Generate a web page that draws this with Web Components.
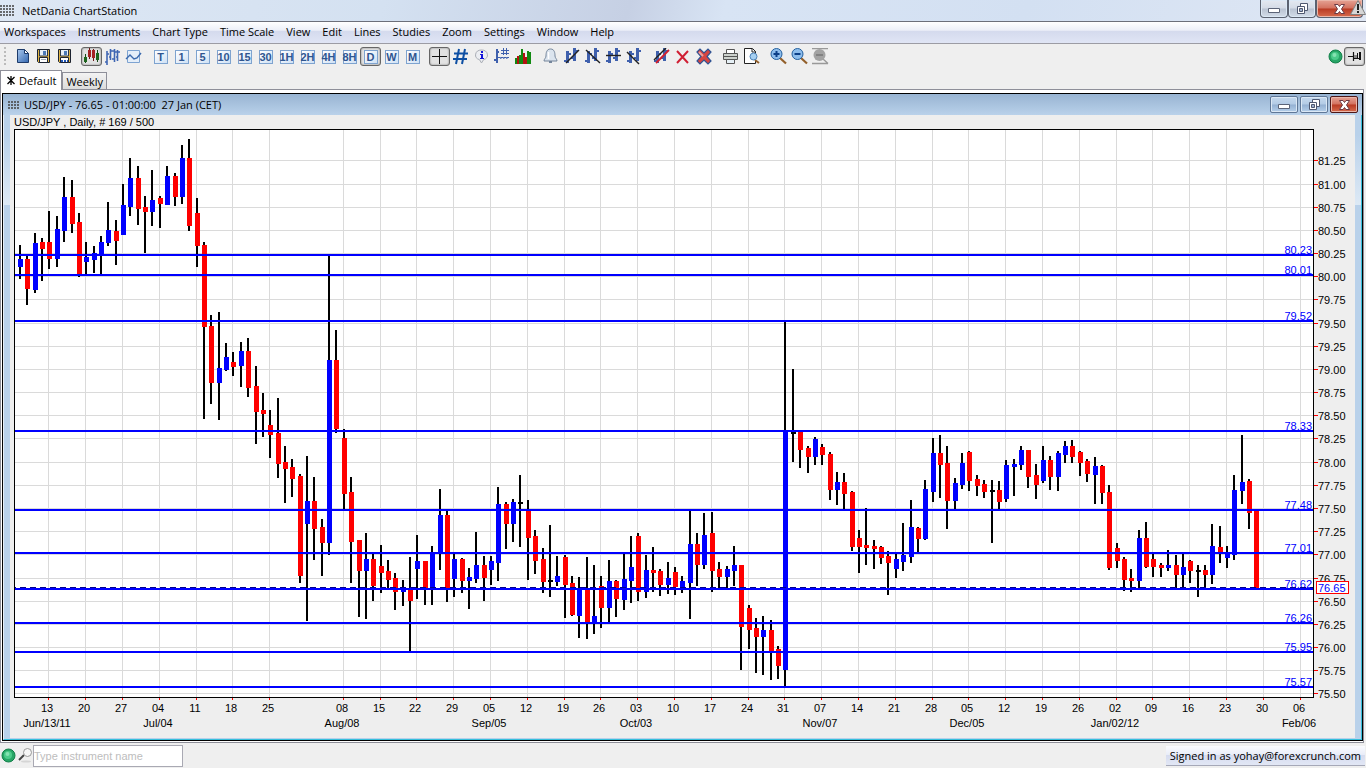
<!DOCTYPE html>
<html lang="en">
<head>
<meta charset="utf-8">
<title>NetDania ChartStation</title>
<style>
  body {
    margin: 0;
    font-family: "Open Sans", "Noto Sans", sans-serif;
    font-size: 11px;
    color: #000;
    background: #efefef;
  }
</style>
</head>
<body>
<chart-station></chart-station>

<script>
// Toolbar icons, drawn on a 17 x 17 grid
const BARS = '<path d="M3 3h3v12H3zM1 12h2v2H1zM6 5h2v2H6zM10 0h3v13h-3zM8 9h2v2H8zM13 2h2v2h-2z" fill="#3f60ad"/>';
const FLOPPY = `
  <path d="M2.500 1.500h12v13h-11l-1-1z" fill="#e0b545" stroke="#1c2330"/>
  <path d="M5 2h7v6H5z" fill="#e8f0f8"/><path d="M4.500 2v6h8V2" fill="none" stroke="#2b3646"/>
  <path d="M8 3h3v4H8z" fill="#4c79b5"/>`;
const ICONS = {
  newfile: `<defs><linearGradient id="g" x2="1" y2="1"><stop stop-color="#a9c8ee"/><stop offset="1" stop-color="#3568b0"/></linearGradient></defs>
    <path d="M3.500 1.500h7l4 4v9h-11z" fill="url(#g)" stroke="#1d3b6b"/><path d="M10.500 1.500v4h4z" fill="#fff" stroke="#1d3b6b"/>`,
  save: FLOPPY + '<path d="M4.500 9.500h8v5h-8z" fill="#fff" stroke="#1c2330"/><path d="M6 11h5v1H6z" fill="#9aa7b8"/>',
  saveas: FLOPPY + '<path d="M4.500 9.500h8v5h-8z" fill="#fff" stroke="#1c2330"/><path d="M5 12h2v2H5zM8 12h2v2H8zM11 12h1v2h-1z" fill="#1f56b8"/>',
  candles: `<path d="M2 6h1v9H2zM14 2h1v12h-1z" fill="#174a17"/><path d="M6 0h1v11H6zM10 1h1v12h-1z" fill="#6b1717"/>
    <path d="M1 9h3v5H1zM13 5h3v7h-3z" fill="#1c651c"/><path d="M5 2h3v7H5zM9 2h3v8H9z" fill="#a52323"/>`,
  ohlc: '<path d="M3 3v14M1 14h2M3 6h2M6.500 1v11M5 9h2M7 3h3M10.500 1v13M8 11h3M10 4h3M13.500 2v11M12 9h2M14 4h2" fill="none" stroke="#3f66b3" stroke-width="1.6"/>',
  line: '<path d="M2.500 2.500h12v12h-12z" fill="#e4eef9" stroke="#7da3d1"/><path d="M1 11l4-4 4 4 3-1 4-5" fill="none" stroke="#3a69ad" stroke-width="1.400"/>',
  cross: '<path d="M8.500 1v15M1 8.500h15" stroke="#111"/>',
  hash: '<path d="M7 1L4 16M13 1l-3 15M2 5.500h14M1 11h14" stroke="#0d4fa3" stroke-width="2"/>',
  info: '<path d="M8.500 2a6 5 0 0 1 2 9.700L8.500 15l-2-3.300A6 5 0 0 1 8.500 2z" fill="#eceef2" stroke="#a9adb5"/><path d="M8 3h2v2H8zM7 6h3v4h1v1H7v-1h1V7H7z" fill="#1212d8"/>',
  values: '<path d="M2 1h2v14H2zM0 11h2v2H0zM4 3h1v2H4z" fill="#3f60ad"/><path d="M9.500 0v7M12.500 0v7M7 2.500h8M7 5.500h8" stroke="#3f60ad"/><path d="M6 10h9" stroke="#3f60ad" stroke-width="1.500" stroke-dasharray="1.500"/><path d="M4 9.500h12" stroke="#3f60ad" stroke-dasharray="2 1"/>',
  volume: '<path d="M0 10h2v6H0zM4 7h2v9H4zM6 1h2v15H6zM12 3h2v13h-2zM14 4h2v12h-2z" fill="#118a11"/><path d="M2 8h2v8H2zM8 5h2v11H8zM10 9h2v7h-2z" fill="#b31111"/>',
  bell: '<path d="M8.500 1c4 0 4.500 4 4.500 7 0 2 2 3 2 5H2c0-2 2-3 2-5 0-3 .500-7 4.500-7z" fill="#dbe4ee" stroke="#74859b"/><path d="M7 13h3v2H7z" fill="#74859b"/><path d="M6.500 4v7" stroke="#fff" stroke-width="1.500"/>',
  trend: BARS + '<path d="M3 15L16 2" stroke="#222" stroke-width="1.400"/>',
  ray: BARS + '<path d="M2 2l14 13" stroke="#222" stroke-width="1.400"/>',
  level: BARS + '<path d="M1 7.500h15" stroke="#222" stroke-width="1.400"/>',
  channel: BARS + '<path d="M1 4l12 12" stroke="#222" stroke-width="1.400"/>',
  editline: BARS + '<path d="M1 12L13 0" stroke="#222" stroke-width="1.400"/><path d="M3 15L16 2" stroke="#d3202f" stroke-width="1.800"/>',
  remove: '<path d="M3 3l11 12M14 3L3 15" stroke="#d01f33" stroke-width="2"/>',
  removeall: '<path d="M2 4l3-3 4 4 4-4 3 3-4 4.500 4 4.500-3 3-4-4-4 4-3-3 4-4.500z" fill="#d64541" stroke="#2f5394" stroke-width="1.200"/><path d="M4 4l4 4" stroke="#eda29c" stroke-width="2"/>',
  print: '<path d="M4.500 1.500h8v4h-8z" fill="#fff" stroke="#555"/><path d="M1.500 5.500h14v6h-14z" fill="#cdd2cd" stroke="#555"/><path d="M2 8.500h13" stroke="#555"/><path d="M4.500 11.500h8v4h-8z" fill="#e6f0f6" stroke="#555"/>',
  preview: '<path d="M1.500 .500h8l3 3v12h-11z" fill="#fff" stroke="#222"/><path d="M9 1v3h4" fill="none" stroke="#222"/><path d="M12 12l4 3" stroke="#93602b" stroke-width="2"/><circle cx="10.500" cy="8.500" r="3.500" fill="#a6d0f2" stroke="#4c82b8"/>',
  zoomin: '<path d="M10 10l6 5.500" stroke="#93602b" stroke-width="2.200"/><circle cx="6.500" cy="6" r="5.500" fill="#8dbdec" stroke="#24609f"/><path d="M3.500 6h6M6.500 3v6" stroke="#0c3f87" stroke-width="2"/>',
  zoomout: '<path d="M10 10l6 5.500" stroke="#93602b" stroke-width="2.200"/><circle cx="6.500" cy="6" r="5.500" fill="#8dbdec" stroke="#24609f"/><path d="M3.500 6h6" stroke="#0c3f87" stroke-width="2"/>',
  zoomreset: '<path d="M0 .500h16M0 15.500h16M11 11l5 4.500" stroke="#999" stroke-width="1.400"/><circle cx="7.500" cy="7" r="6" fill="#a3a3a3"/><path d="M4 7h7" stroke="#777" stroke-width="1.500"/>',
  pin: '<path d="M2 8.500h5M7.500 4v9" stroke="#111" stroke-width="1.200"/><path d="M8 7h4v4H8z" fill="#888"/><path d="M8 10h5v1H8zM11 5h1v6h-1zM13 4h2v8h-2z" fill="#111"/>'
};

const GLYPHS = {
  min: '<path d="M2.500 7.500h11v4h-11z" fill="#fff" stroke="#5b6478"/>',
  restore: '<path d="M6.500 2.500h7v7h-7z" fill="#fff" stroke="#4f5870"/><path d="M3.500 5.500h7v7h-7z" fill="#fff" stroke="#4f5870"/><path d="M5.500 7.500h3v3h-3z" fill="#9fb0cc" stroke="#4f5870"/>',
  close: '<path d="M3.500 3.500h3.500l1.500 2 1.500-2h3.500L10.500 8l3 4.500H10l-1.500-2-1.500 2H3.500l3-4.500z" fill="#fff" stroke="#6b3a45"/>'
};

const BALL = `<svg width="15" height="15" viewBox="0 0 15 15" aria-hidden="true">
  <circle cx="7.500" cy="7.500" r="6.500" fill="#27a566" stroke="#0f7f47"/>
  <circle cx="7" cy="7" r="4" fill="#4ccb8a"/><circle cx="6.500" cy="6" r="2" fill="#86e2b2"/></svg>`;

function shadow(el, html) {
  el.attachShadow({ mode: 'open' }).innerHTML = html;
}

// Dotted application mark
class DotMark extends HTMLElement {
  constructor() {
    super();
    shadow(this, `
      <style>
        :host { display: block; flex: none; width: 15px; height: 12px;
          background: radial-gradient(circle at 1px 1px, #4a4a4a 1px, transparent 1px) 0 0 / 3px 3px; opacity: .8; }
        :host([small]) { width: 11px; height: 8px; }
      </style>`);
  }
}

class WindowButton extends HTMLElement {
  constructor() {
    super();
    const kind = this.getAttribute('kind');
    shadow(this, `
      <style>
        :host { display: block; width: 28px; height: 17px; }
        button { display: flex; align-items: center; justify-content: center; width: 100%; height: 100%;
          box-sizing: border-box; padding: 0; border: 1px solid #5f7797; border-radius: 2px;
          background: linear-gradient(#c5d9ee, #b3cbe5 48%, #94b0d2 52%, #b4cfea); box-shadow: inset 0 0 0 1px #dbe8f5; }
        .close { border-color: #4e1717; background: linear-gradient(#e5a294, #d3715f 48%, #b93a23 52%, #d66b4d); box-shadow: inset 0 0 0 1px #eab6a9; }
        :host([big]) { height: 18px; }
        :host([big]) button { border-top: 0; border-radius: 0 0 4px 4px; border-color: #5b6270; }
        :host([big]) button:not(.close) { background: linear-gradient(#e4e9f1, #d4dbe6 48%, #b9c3d2 52%, #d3dce8); }
      </style>
      <button class="${kind}" aria-label="${kind}"><svg width="17" height="16" viewBox="0 0 17 16">${GLYPHS[kind]}</svg></button>`);
  }
}

class TitleBar extends HTMLElement {
  constructor() {
    super();
    shadow(this, `
      <style>
        :host { display: flex; justify-content: space-between; height: 21px; border-bottom: 1px solid #6c6f7a;
          background: linear-gradient(105deg, #dde7f4, #d4e1f1 28%, #c6d0e4 46%, #d8e4f4 53%, #d3e0f2 75%, #dfe7f4); }
        .name { display: flex; align-items: center; gap: 7px; }
        .controls { display: flex; position: relative; padding-right: 3px; }
        .controls window-button:nth-child(3) { width: 47px; }
        .alert { position: absolute; right: 0; top: 0; }
      </style>
      <div class="name"><dot-mark></dot-mark><span><slot></slot></span></div>
      <div class="controls">
        <window-button big kind="min"></window-button>
        <window-button big kind="restore"></window-button>
        <window-button big kind="close"></window-button>
        <svg class="alert" width="16" height="16" viewBox="0 0 16 16"><path d="M8 .500L15.500 14.500H.500z" fill="#d6d6d6" stroke="#808080"/><path d="M7 4h2v6H7zM7 11h2v2H7z" fill="#222"/></svg>
      </div>`);
  }
}

class MenuBar extends HTMLElement {
  constructor() {
    super();
    const items = ['Workspaces', 'Instruments', 'Chart Type', 'Time Scale', 'View', 'Edit', 'Lines', 'Studies', 'Zoom', 'Settings', 'Window', 'Help'];
    shadow(this, `
      <style>
        :host { display: block; height: 21px; border-bottom: 1px solid #9c9ca4;
          background: linear-gradient(#fff, #eceff8 40%, #d4daed 42%, #e0e5f5); }
        nav { display: flex; gap: 12px; padding-left: 4px; }
        button { font: inherit; line-height: 20px; color: inherit; border: 0; padding: 0; background: none; }
      </style>
      <nav>${items.map(t => `<button>${t}</button>`).join('')}</nav>`);
  }
}

class ToolButton extends HTMLElement {
  constructor() {
    super();
    const icon = this.getAttribute('icon');
    const face = icon
      ? `<svg width="17" height="17" viewBox="0 0 17 17" aria-hidden="true">${ICONS[icon]}</svg>`
      : '<span><slot></slot></span>';
    shadow(this, `
      <style>
        :host { display: block; width: 21px; height: 19px; }
        button { display: flex; align-items: center; justify-content: center; width: 100%; height: 100%;
          box-sizing: border-box; padding: 0; border: 1px solid transparent; border-radius: 3px; background: none; }
        :host([pressed]) button { border: 1px solid #666; background: #e2e2e2; box-shadow: inset 0 0 2px #777; }
        svg { flex: none; }
        span { display: flex; justify-content: center; box-sizing: border-box; width: 14px; height: 14px; border: 1px solid #7ea3cf;
          background: linear-gradient(135deg, #fff, #cfe1f5); font: bold 11px/12px "Liberation Sans", sans-serif; color: #2f5590; }
      </style>
      <button ${icon ? `aria-label="${icon}"` : ''}>${face}</button>`);
  }
}

class ToolBar extends HTMLElement {
  constructor() {
    super();
    const groups = [
      ['*newfile', '*save', '*saveas'],
      ['*candles!', '*ohlc', '*line'],
      ['T', '1', '5', '10', '15', '30', '1H', '2H', '4H', '8H', 'D!', 'W', 'M'],
      ['*cross!', '*hash', '*info', '*values', '*volume'],
      ['*bell', '*trend', '*ray', '*level', '*channel'],
      ['*editline', '*remove', '*removeall'],
      ['*print', '*preview'],
      ['*zoomin', '*zoomout', '*zoomreset']
    ];
    const button = item => {
      const pressed = item.endsWith('!') ? 'pressed' : '';
      const name = item.replace('!', '');
      return name[0] === '*'
        ? `<tool-button icon="${name.slice(1)}" ${pressed}></tool-button>`
        : `<tool-button ${pressed}>${name}</tool-button>`;
    };
    shadow(this, `
      <style>
        :host { display: flex; align-items: center; gap: 6px; height: 25px; padding: 0 1px 1px 4px; background: #efefef; }
        .grip { width: 2px; height: 20px; background: repeating-linear-gradient(#bbb 0 2px, transparent 2px 4px); }
        .group { display: flex; }
        .end { display: flex; align-items: center; margin-left: auto; gap: 1px; }
      </style>
      <div class="grip"></div>
      ${groups.map(g => `<div class="group">${g.map(button).join('')}</div>`).join('')}
      <div class="end">${BALL}<tool-button icon="pin" pressed></tool-button></div>`);
  }
}

class TabStrip extends HTMLElement {
  constructor() {
    super();
    shadow(this, `
      <style>
        :host { display: flex; align-items: flex-end; height: 20px; margin-right: 2px; }
        button { font: inherit; color: inherit; box-sizing: border-box; border: 1px solid #8e8f99; border-bottom: 0; padding: 0 3px; height: 18px; line-height: 17px; background: linear-gradient(#f3f3f3, #dcdcdc); }
        .active { display: flex; align-items: center; gap: 4px; height: 20px; padding: 0 5px 0 6px; background: #fff; }
        .rest { flex: 1; }
        button:not(.active), .rest { border-bottom: 1px solid #8e8f99; }
      </style>
      <button class="active"><svg width="8" height="9" viewBox="0 0 8 9"><path d="M4 0v9M.500 1l7 7M7.500 1l-7 7" stroke="#000" stroke-width="1.300"/></svg>Default</button>
      <button>Weekly</button>
      <div class="rest"></div>`);
  }
}

class ChartWindow extends HTMLElement {
  constructor() {
    super();
    shadow(this, `
      <style>
        :host { display: flex; flex-direction: column; flex: 1; border: 1px solid #000; min-height: 0; }
        header { display: flex; align-items: center; height: 21px; padding: 0 4px 0 5px; gap: 5px; background: linear-gradient(#98b4d2, #b9d1ea); }
        .caption { flex: 1; white-space: pre; }
        .controls { display: flex; gap: 2px; }
        .frame { flex: 1; display: flex; min-height: 0; padding: 0 6px 1px; border: 1px solid #35bfdc; border-left-color: #e6eef7; border-top: 0;
          background: linear-gradient(#b9d1ea 20px, #dde9f5) 0 0 / 100% 90px no-repeat, #b9d1ea; }
        .pane { flex: 1; display: flex; flex-direction: column; min-width: 0; background: #eee; }
      </style>
      <header>
        <dot-mark small></dot-mark><span class="caption"><slot name="caption"></slot></span>
        <div class="controls">
          <window-button kind="min"></window-button>
          <window-button kind="restore"></window-button>
          <window-button kind="close"></window-button>
        </div>
      </header>
      <div class="frame"><div class="pane"><slot></slot></div></div>`);
  }
}

// One entry per session: colour, high, body top, body bottom, low.
// b = up, r = down, k = unchanged. Heights are drawing rows, the plot starts at ROW.
const ROW = 129;
const SESSIONS = `
b 245 259 267 279|r 255 259 289 305|b 233 243 290 293|r 238 242 249 281|r 211 242 259 269|b 216 229 259 267|b 177 197 231 242|r 180 197 224 233
r 213 222 276 277|b 242 257 262 275|b 246 253 260 273|b 236 242 256 275|b 202 230 243 246|r 220 231 241 265|b 184 205 235 235|b 158 178 207 216
r 166 178 209 225|r 196 207 212 253|b 170 200 212 226|r 196 198 204 228|b 166 176 205 205|r 173 176 197 206|b 145 158 197 204|r 139 158 226 231
r 198 213 246 267|r 242 245 327 419|r 315 326 383 404|b 312 368 383 420|b 343 357 370 371|r 352 362 367 376|b 342 351 366 387|r 338 351 388 397
r 366 386 412 444|r 393 410 414 437|r 410 425 435 458|r 398 433 464 478|r 446 462 469 503|r 459 467 479 497|r 474 476 576 583|b 456 501 524 621
r 477 501 529 560|r 519 527 543 576|b 255 360 543 555|r 330 360 429 433|r 429 438 494 509|r 477 492 542 583|r 540 540 571 617|b 533 559 571 619
r 554 559 586 601|r 545 566 573 593|r 560 571 580 589|r 573 578 592 610|b 580 587 592 606|r 557 590 601 651|b 535 561 569 599|r 561 561 588 605
b 546 553 589 605|b 489 515 553 570|r 510 515 589 602|b 554 559 579 597|r 558 559 581 593|b 568 577 581 609|b 532 565 579 583|r 556 565 578 601
b 556 561 570 585|b 487 504 563 581|r 502 504 524 549|b 499 502 524 542|k 475 502 504 547|r 500 510 538 580|r 530 536 561 574|r 548 559 582 593
k 525 580 582 597|b 556 576 582 586|r 555 557 585 618|r 576 583 615 616|b 577 588 616 638|r 557 589 623 639|b 565 616 623 634|r 576 586 608 628
b 560 581 608 623|r 580 581 599 617|b 554 579 600 610|b 536 567 581 603|r 533 536 592 601|b 555 570 592 598|r 547 570 573 592|r 569 571 585 596
b 562 578 585 594|r 567 572 587 595|b 576 581 589 593|b 510 544 583 619|r 533 544 565 586|b 513 535 565 569|r 512 533 571 592|r 562 569 577 588
b 566 569 577 588|b 546 565 571 586|r 565 565 627 670|r 605 608 630 649|r 618 628 637 673|b 616 630 637 675|r 620 630 652 680|r 646 649 666 679
b 321 430 670 686|k 369 432 434 462|r 431 431 450 468|r 446 448 457 473|b 437 439 457 465|r 444 447 455 465|r 452 454 490 500|b 472 482 490 505
r 473 482 494 510|r 491 492 547 551|r 530 538 547 573|r 508 545 548 565|r 540 546 549 569|r 546 547 558 564|r 551 556 563 595|b 554 559 569 578
b 523 555 562 571|b 500 527 557 563|r 527 528 539 552|b 480 489 539 540|b 438 453 492 502|r 435 453 465 498|r 446 463 501 529|b 478 483 501 510
b 453 463 485 489|r 451 452 481 491|r 475 479 486 496|r 480 484 492 498|k 480 490 492 543|r 481 490 502 509|b 460 465 499 502|b 459 464 467 496
b 446 450 465 470|r 450 450 477 488|r 464 475 485 499|b 446 460 481 483|r 456 460 477 490|b 451 453 477 491|b 441 446 455 463|r 440 446 457 463
r 451 452 463 476|r 459 461 474 482|b 457 466 475 504|r 465 466 493 504|r 485 492 568 570|r 543 548 561 568|r 557 559 580 591|r 569 578 581 592
b 530 538 581 588|r 522 538 567 568|r 554 559 567 577|r 563 565 568 577|b 550 565 568 571|r 555 565 575 588|b 554 567 575 588|r 560 561 571 583
k 565 570 572 597|r 565 570 575 588|b 524 546 575 584|r 526 547 553 563|b 546 553 558 568|b 475 490 555 560|b 435 482 491 504|r 479 481 513 529
r 510 510 588 588`.trim().split(/[|\n]/).map(s => s.split(' '));

const LEVELS = [['80.23', 254], ['80.01', 274], ['79.52', 320], ['78.33', 430], ['77.48', 509], ['77.01', 552], ['76.62', 588], ['76.26', 622], ['75.95', 651], ['75.57', 686]];
const WEEKS = '13 20 27 04 11 18 25 - 08 15 22 29 05 12 19 26 03 10 17 24 31 07 14 21 28 05 12 19 26 02 09 16 23 30 06'.split(' ');
const MONTHS = { 0: 'Jun/13/11', 3: 'Jul/04', 8: 'Aug/08', 12: 'Sep/05', 16: 'Oct/03', 21: 'Nov/07', 25: 'Dec/05', 29: 'Jan/02/12', 34: 'Feb/06' };

class PriceChart extends HTMLElement {
  constructor() {
    super();
    shadow(this, `
      <style>
        :host { display: flex; flex-direction: column; flex: 1; min-height: 0; font: 11px/14px "Liberation Sans", sans-serif; }
        .symbol { height: 14px; padding-left: 4px; }
        .plot { flex: 1; min-height: 0; overflow: hidden; }
        svg { display: block; }
        rect, line { shape-rendering: crispEdges; }
      </style>
      <div class="symbol"><slot></slot></div>
      <div class="plot"></div>`);
  }

  connectedCallback() {
    this.observer = new ResizeObserver(() => this.draw());
    this.observer.observe(this.shadowRoot.querySelector('.plot'));
  }

  disconnectedCallback() {
    this.observer.disconnect();
  }

  draw() {
    const plot = this.shadowRoot.querySelector('.plot');
    const width = plot.clientWidth;
    const height = plot.clientHeight;
    // Axis gutters keep their size, the plot takes the rest
    const right = width - 42;
    const bottom = height - 41;
    const sx = (right - 4) / 1299;
    const sy = bottom / 568;
    const X = x => Math.round(4 + (x - 14) * sx);
    const Y = y => Math.round((y - ROW) * sy);
    const rect = (x, y, w, h, fill) => `<rect x="${x}" y="${y}" width="${w}" height="${h}" fill="${fill}"/>`;
    const text = (x, y, t, anchor = 'start', fill = '#000') => `<text x="${x}" y="${y}" text-anchor="${anchor}" fill="${fill}">${t}</text>`;
    let out = rect(4, 0, right - 4, bottom, '#fff');

    // Grid and axes
    for (let k = 0; k < 24; k++) {
      const y = Y(160.45 + k * 23.17);
      out += rect(5, y, right - 5, 1, '#dadada') + rect(right + 1, y, 4, 1, '#f00');
      out += text(right + 5, y + 5, (81.25 - k * .25).toFixed(2));
    }
    WEEKS.forEach((day, k) => {
      if (day === '-') return;
      const x = X(48.4 + k * 36.8);
      out += rect(x, 1, 1, bottom - 1, '#dadada') + rect(x, bottom + 1, 1, 2, '#f00');
      out += text(x - 1, bottom + 15, day, 'middle');
      if (MONTHS[k]) out += text(x - 1, bottom + 30, MONTHS[k], 'middle');
    });

    // Candles
    const fills = { b: '#00f', r: '#f00', k: '#000' };
    SESSIONS.forEach(([kind, high, top, base, low], i) => {
      const x = X(18 + i * 7.36);
      out += rect(x + 1, Y(high), 2, Y(low) - Y(high), '#000');
      out += rect(x, Y(top), 5, Y(base) - Y(top), fills[kind]);
    });

    // Support and resistance lines
    LEVELS.forEach(([label, row]) => {
      out += rect(5, Y(row), right - 5, 2, '#00f') + text(right - 1, Y(row), label, 'end', '#00f');
    });
    const last = Y(587);
    out += `<line x1="5" x2="${right}" y1="${last + .5}" y2="${last + .5}" stroke="#00008b" stroke-dasharray="6 4" stroke-dashoffset="5"/>`;

    // Plot frame
    out += rect(4, 0, right - 3, 1, '#000') + rect(4, bottom, right - 3, 1, '#000');
    out += rect(4, 0, 1, bottom, '#000') + rect(right, 0, 1, bottom, '#000');

    // Last price marker
    out += rect(right + 3, last - 6, 33, 13, '#f00') + rect(right + 4, last - 5, 31, 11, '#fff') + text(right + 5, last + 5, '76.65', 'start', '#00f');
    plot.innerHTML = `<svg width="${width}" height="${height}" role="img" aria-label="Daily candlestick chart">${out}</svg>`;
  }
}

class StatusBar extends HTMLElement {
  constructor() {
    super();
    shadow(this, `
      <style>
        :host { display: flex; align-items: center; height: 25px; padding: 0 1px 0 1px; }
        label { display: flex; align-items: center; gap: 2px; }
        input { box-sizing: border-box; width: 150px; height: 22px; padding: 0; border: 1px solid #a9a9b3; background: #fff; font: 11px "Liberation Sans", sans-serif; }
        input::placeholder { color: #bdbdbd; opacity: 1; }
        .user { margin-left: auto; height: 19px; line-height: 19px; padding: 0 4px; border-bottom: 1px solid #a5a8b8; background: linear-gradient(#fafbfe, #e9edf8 45%, #d6dcef 50%, #e2e7f5); }
      </style>
      <label for="find">${BALL}<svg width="15" height="17" viewBox="0 0 15 17" aria-hidden="true"><ellipse cx="8" cy="14.500" rx="5" ry="1" fill="#d5d5d5"/><path d="M1 13l5-5" stroke="#444" stroke-width="2"/><circle cx="9.500" cy="5.500" r="4" fill="#f6f6f6" stroke="#999"/></svg></label>
      <input id="find" type="text" placeholder="Type instrument name">
      <div class="user"><slot></slot></div>`);
  }
}

class ChartStation extends HTMLElement {
  constructor() {
    super();
    shadow(this, `
      <style>
        :host { display: flex; flex-direction: column; height: 100vh; overflow: hidden; }
        .desk { flex: 1; display: flex; min-height: 0; margin-right: 2px; padding: 3px 0 1px 1px; border: 1px solid #8e8f99; border-top: 0; background: #fff; }
      </style>
      <title-bar>NetDania ChartStation</title-bar>
      <menu-bar></menu-bar>
      <tool-bar></tool-bar>
      <tab-strip></tab-strip>
      <div class="desk">
        <chart-window>
          <span slot="caption">USD/JPY - 76.65 - 01:00:00  27 Jan (CET)</span>
          <price-chart>USD/JPY , Daily, # 169 / 500</price-chart>
        </chart-window>
      </div>
      <status-bar>Signed in as yohay@forexcrunch.com</status-bar>`);
  }
}

customElements.define('dot-mark', DotMark);
customElements.define('window-button', WindowButton);
customElements.define('title-bar', TitleBar);
customElements.define('menu-bar', MenuBar);
customElements.define('tool-button', ToolButton);
customElements.define('tool-bar', ToolBar);
customElements.define('tab-strip', TabStrip);
customElements.define('chart-window', ChartWindow);
customElements.define('price-chart', PriceChart);
customElements.define('status-bar', StatusBar);
customElements.define('chart-station', ChartStation);
</script>
</body>
</html>
